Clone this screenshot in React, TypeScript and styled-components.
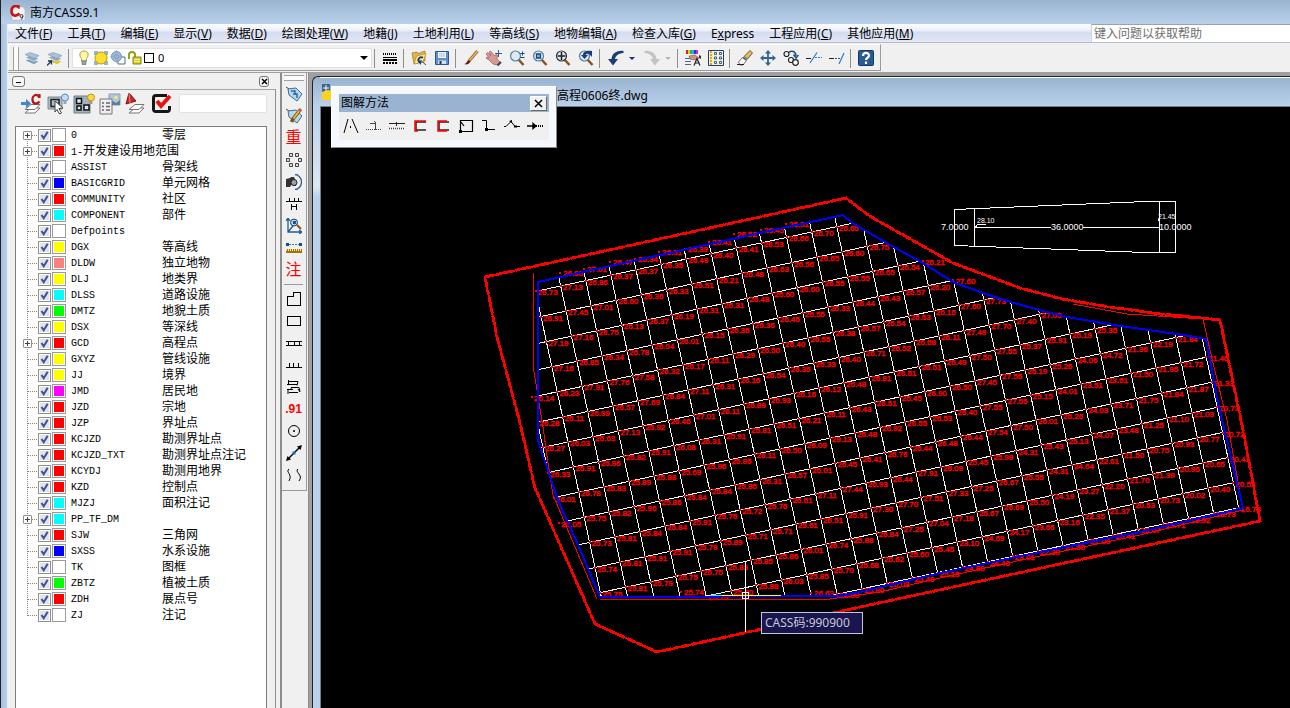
import React from "react";
import styled, { createGlobalStyle } from "styled-components";

const Global = createGlobalStyle`
  * { box-sizing: border-box; }
  html, body { margin: 0; height: 100%; }
  #root { height: 100%; }
  button { font: inherit; color: inherit; background: none; border: 0; padding: 0; cursor: default; }
`;

const UI = `"Noto Sans", "Noto Sans CJK SC", sans-serif`;

/* ---------- window frame ---------- */
const Window = styled.div`
  display: flex;
  flex-direction: column;
  min-height: 100vh;
  height: 100%;
  overflow: hidden;
  padding-left: 8px;
  font: 12px/16px ${UI};
  color: #000;
  background: linear-gradient(90deg, #1c2228 1px, #a9c2de 1px, #b9d1ea 7px, #e6eef8 7px);
`;
const TitleBar = styled.header`
  display: flex;
  align-items: center;
  gap: 4px;
  height: 24px;
  flex: none;
  margin-left: -7px;
  padding: 2px 0 0 9px;
  background: linear-gradient(#9ab3d0, #b9d1ea);
`;
const MenuBar = styled.nav`
  display: flex;
  align-items: stretch;
  height: 19px;
  flex: none;
  background: linear-gradient(#fcfdff 0, #e9eef8 7px, #d5dcee 8px, #e3e7f6 18px);
  border-bottom: 1px solid #b6bccc;
`;
const MenuItems = styled.div`
  display: flex;
  flex: 1;
  white-space: nowrap;
`;
const MenuItem = styled.button`
  padding: 0 8px 0 7px;
  line-height: 20px;
`;
const HelpBox = styled.input`
  width: 199px;
  padding: 0 2px;
  border: 0;
  border-top: 1px solid #a0a0a0;
  border-left: 1px solid #d0d4e0;
  font: 12px/16px ${UI};
  background: #fff;
  &::placeholder { color: #6d6d6d; opacity: 1; }
`;

/* ---------- toolbar ---------- */
const ToolStrip = styled.div`
  display: flex;
  height: 30px;
  flex: none;
  padding-top: 1px;
  background: #f0f0f0;
  border-bottom: 1px solid #a0a0a0;
`;
const ToolBar = styled.div`
  display: flex;
  align-items: center;
  height: 27px;
  padding: 1px 3px 0 4px;
  border: 1px solid #fff;
  border-right-color: #9a9a9a;
  border-bottom-color: #9a9a9a;
`;
const Grip = styled.span<{ $flat?: boolean }>`
  flex: none;
  width: ${(p) => (p.$flat ? "20px" : "6px")};
  height: ${(p) => (p.$flat ? "6px" : "23px")};
  margin: ${(p) => (p.$flat ? "0 0 2px" : "0 1px 0 0")};
  border: solid #a0a0a0;
  border-width: ${(p) => (p.$flat ? "1px 0" : "0 1px")};
  background: #fbfbfb;
`;
const ToolButton = styled.button<{ $caret?: boolean }>`
  display: flex;
  align-items: center;
  justify-content: center;
  gap: 5px;
  flex: none;
  width: ${(p) => (p.$caret ? "36px" : "23px")};
  height: 22px;
`;
const Sep = styled.span`
  flex: none;
  width: 1px;
  height: 19px;
  margin: 0 3px 0 2px;
  background: #8e8e8e;
`;
const LayerPicker = styled.label`
  display: flex;
  align-items: center;
  gap: 1px;
  width: 300px;
  height: 20px;
  padding-left: 3px;
  background: #fff;
  border: 1px solid #e2e2e2;
`;
const LayerColor = styled.span`
  width: 10px;
  height: 10px;
  border: 1px solid #000;
  background: #fff;
`;
const LayerSelect = styled.select`
  flex: 1;
  margin-left: 3px;
  height: 18px;
  border: 0;
  appearance: none;
  background: none;
  font: 11px/16px ${UI};
  color: #000;
`;
const Caret = styled.span<{ $color: string; $size: number }>`
  border: ${(p) => p.$size}px solid transparent;
  border-top-color: ${(p) => p.$color};
  border-bottom: 0;
  margin-right: ${(p) => (p.$size > 3 ? "3px" : "0")};
`;

/* ---------- body ---------- */
const Body = styled.div`
  display: flex;
  flex: 1;
  min-height: 0;
  background: #f0f0f0;
`;
const LayerPanel = styled.aside`
  display: flex;
  flex-direction: column;
  flex: none;
  width: 274px;
  border-right: 2px solid #8c8c8c;
`;
const PanelHead = styled.div`
  display: flex;
  justify-content: space-between;
  align-items: center;
  height: 16px;
  flex: none;
  padding: 1px 11px 0 4px;
`;
const PanelButton = styled.button<{ $w: number }>`
  display: flex;
  align-items: center;
  justify-content: center;
  width: ${(p) => p.$w}px;
  height: 11px;
  border: 1px solid #777;
  border-radius: 3px;
  background: #f6f6f6;
`;
const PanelFrame = styled.div`
  display: flex;
  flex-direction: column;
  flex: 1;
  min-height: 0;
  margin-right: 4px;
  padding: 0 8px 0 7px;
  border-top: 1px solid #a6a6a6;
  border-right: 1px solid #8c8c8c;
`;
const PanelTools = styled.div`
  display: flex;
  align-items: center;
  gap: 3px;
  height: 36px;
  flex: none;
  padding: 0 0 9px 6px;
`;
const PanelTool = styled.button`
  display: flex;
  flex: none;
  width: 23px;
  height: 22px;
`;
const Filter = styled.input`
  flex: 1;
  min-width: 0;
  height: 19px;
  margin-left: 2px;
  border: 1px solid #dde2ea;
  border-radius: 2px;
  background: #fff;
`;
const LayerList = styled.ul`
  flex: 1;
  min-height: 0;
  margin: 0;
  padding: 0;
  overflow: hidden;
  list-style: none;
  background: #fff;
  border: 1px solid #7c7c7c;
  border-bottom: 0;
`;
const LayerRow = styled.li`
  display: flex;
  align-items: center;
  height: 16px;
  padding-left: 7px;
`;
const Branch = styled.span<{ $first: boolean; $last: boolean }>`
  display: flex;
  align-items: center;
  flex: none;
  width: 15px;
  height: 16px;
  background:
    repeating-linear-gradient(90deg, #8a8a8a 0 1px, transparent 1px 2px) 5px 8px / 10px 1px no-repeat,
    repeating-linear-gradient(#8a8a8a 0 1px, transparent 1px 2px) 4px ${(p) => (p.$first ? 8 : 0)}px / 1px ${(p) => (p.$last ? 9 : 16)}px no-repeat;
`;
const Expander = styled.button`
  display: flex;
  align-items: center;
  justify-content: center;
  width: 9px;
  height: 9px;
  border: 1px solid #8f8f8f;
  border-radius: 1px;
  background: #fff;
`;
const LayerLabel = styled.label`
  display: flex;
  align-items: center;
  flex: 1;
  height: 16px;
  white-space: nowrap;
`;
const Check = styled.input`
  appearance: none;
  flex: none;
  width: 13px;
  height: 13px;
  margin: 0 1px 0 0;
  border: 1px solid #8e8f8f;
  outline: 1px solid #fff;
  outline-offset: -2px;
  background: #dfe4ea;
  &:checked {
    background: #dfe4ea url("data:image/svg+xml,%3Csvg xmlns='http://www.w3.org/2000/svg' viewBox='0 0 11 11'%3E%3Cpath d='M2.5 5l2.2 3.2L8.7 1.8' fill='none' stroke='%23354f9c' stroke-width='2'/%3E%3C/svg%3E") center / 11px no-repeat;
  }
`;
const Swatch = styled.span<{ $c: string }>`
  flex: none;
  width: 14px;
  height: 14px;
  margin-right: 5px;
  border: 1px solid #9b9b9b;
  background: ${(p) => p.$c};
  box-shadow: inset 0 0 0 1px #fff;
`;
const LayerCode = styled.span`
  width: 91px;
  padding-top: 1px;
  font: 10px/16px "Liberation Mono", "Noto Sans CJK SC", monospace;
  b { font: 12px/16px "Noto Sans CJK SC", sans-serif; }
`;
const SideBar = styled.div`
  flex: none;
  width: 27px;
  border-right: 1px solid #8c8c8c;
`;
const SideTools = styled.div`
  display: flex;
  flex-direction: column;
  align-items: center;
  width: 25px;
  padding: 2px 1px 4px 0;
  border: solid #9a9a9a;
  border-width: 0 1px 1px 0;
`;
const SideButton = styled.button<{ $tall?: boolean }>`
  display: flex;
  align-items: center;
  justify-content: center;
  width: 22px;
  height: 22px;
  color: #f00;
  font: ${(p) => (p.$tall ? "700 12px/22px" : "16px/22px")} "Liberation Sans", "Noto Sans CJK SC", sans-serif;
`;
const SideSep = styled.span`
  width: 19px;
  height: 1px;
  margin: 3px 0;
  background: #9a9a9a;
`;

/* ---------- drawing area ---------- */
const Workspace = styled.main`
  position: relative;
  flex: 1;
  min-width: 0;
  display: flex;
  padding: 3px 0 0 3px;
  background: #a0a0a0;
`;
const DocWindow = styled.section`
  display: flex;
  flex-direction: column;
  flex: 1;
  min-width: 0;
  padding-left: 7px;
  border: solid #222;
  border-width: 1px 0 0 1px;
  border-top-left-radius: 6px;
  background: linear-gradient(#9ab3d0 0, #b9d1ea 29px, #dbe7f4 110px, #b9d1ea 120px);
`;
const DocTitle = styled.div`
  display: flex;
  align-items: center;
  height: 29px;
  flex: none;
  border-top: 1px solid #fff;
  background: linear-gradient(#9ab3d0, #b9d1ea);
`;
const DocName = styled.span`
  margin-left: 221px;
  padding-top: 7px;
`;
const Canvas = styled.div`
  flex: 1;
  min-height: 0;
  overflow: hidden;
  background: #000;
  border: solid #7d7d7d;
  border-width: 1px 0 0 1px;
  svg { display: block; }
`;
const Palette = styled.div`
  position: absolute;
  left: 22px;
  top: 13px;
  width: 226px;
  padding: 7px;
  background: #f5f8fd;
  border: 1px solid #fff;
  border-right-color: #8a8a8a;
  border-bottom-color: #8a8a8a;
`;
const PaletteHead = styled.div`
  display: flex;
  align-items: center;
  justify-content: space-between;
  height: 18px;
  padding: 0 2px;
  background: #9ab3d0;
`;
const PaletteClose = styled.button`
  display: flex;
  align-items: center;
  justify-content: center;
  width: 17px;
  height: 15px;
  background: #f0f0f0;
  border: 1px solid #fff;
  border-right-color: #696969;
  border-bottom-color: #696969;
`;
const PaletteTools = styled.div`
  display: flex;
  height: 28px;
  align-items: center;
  background: #f0f0f0;
`;

/* ---------- icons ---------- */
type IconProps = { s?: number; children: React.ReactNode };
const Icon = ({ s = 16, children }: IconProps) => (
  <svg width={s} height={s} viewBox={`0 0 ${s} ${s}`} fill="none" aria-hidden="true">
    {children}
  </svg>
);
const Sheets = ({ top = "#a9c3dc", low = "#7e9db9" }) => (
  <>
    <path d="M1 10.500l5-2 9 3-5 3z" fill={low} stroke="#fff" strokeWidth=".5" />
    <path d="M1 7.500l5-2 9 3-5 3z" fill="#8fabc5" stroke="#fff" strokeWidth=".5" />
    <path d="M1 4.500l5-2 9 3-5 3z" fill={top} stroke="#6d89a4" strokeWidth=".5" />
  </>
);
const AppLogo = () => (
  <Icon s={16}>
    <path d="M2 2h11l2 3v10H2z" fill="#f3f3f3" stroke="#bbb" strokeWidth=".6" />
    <path d="M9 2.500C6-.5 1.500 1 1.500 6S6 12 9.500 8.500" stroke="#c11" strokeWidth="2.600" />
    <path d="M9 0v4" stroke="#911" />
    <circle cx="11.500" cy="11" r="1.500" stroke="#333" />
    <path d="M13 11.500l-1.500 3" stroke="#333" />
  </Icon>
);
const LayersIcon = () => <Icon><Sheets /></Icon>;
const LayerPrevIcon = () => (
  <Icon>
    <Sheets low="#e0c020" />
    <path d="M0 15.500l4-4M1 11h3.500v3.500" stroke="#123a66" strokeWidth="1.300" />
  </Icon>
);
const BulbIcon = () => (
  <Icon>
    <path d="M8 1c-5 0-5 5-2.500 7.500V11h5V8.500C13 6 13 1 8 1z" fill="#fff6a8" stroke="#b29a3a" />
    <path d="M6 11h4v3.500H6z" fill="#9aa5ae" stroke="#59646c" strokeWidth=".6" />
  </Icon>
);
const SunIcon = () => (
  <Icon>
    <path d="M1 1h4v4H1zM11 1h4v4h-4zM1 11h4v4H1zM11 11h4v4h-4z" fill="#8fb8c8" />
    <circle cx="8" cy="8" r="6" fill="#ffdf2e" stroke="#b8971a" />
  </Icon>
);
const FreezeIcon = () => (
  <Icon>
    <path d="M8 7h7v7H8z" fill="#fff" stroke="#4d6f8c" />
    <circle cx="6.500" cy="6.500" r="5" fill="#a3bdd6" stroke="#7494b2" />
    <circle cx="6.500" cy="6.500" r="2" fill="#c9daea" stroke="#6d8fb0" />
    <path d="M6.500 0v13M0 6.500h13" stroke="#8ba8c3" strokeWidth=".7" />
  </Icon>
);
const LockIcon = () => (
  <Icon>
    <path d="M2 9V4.500C2 1 8 1 8 4.500V8" stroke="#98a018" strokeWidth="2" />
    <path d="M6 7h8v7H6z" fill="#d6d02c" stroke="#7f8414" />
    <path d="M7 9.500h6M7 11.500h6" stroke="#fff9a0" strokeWidth=".8" />
  </Icon>
);
const LineTypeIcon = () => (
  <Icon>
    <g shapeRendering="crispEdges" stroke="#000">
      <path d="M1 4h14" strokeWidth="2" strokeDasharray="1 1" />
      <path d="M1 7.500h14" />
      <path d="M1 10h14" strokeWidth="2" />
      <path d="M1 13h14" strokeWidth="2" strokeDasharray="2 1" />
    </g>
  </Icon>
);
const OpenIcon = () => (
  <Icon>
    <path d="M1 3l5-1 1 1.500L14 1v10L3 14z" fill="#e0b54a" stroke="#9b7420" strokeWidth=".7" />
    <path d="M3 14L5.500 6 15 3.500 12 12z" fill="#ffe08a" stroke="#b08a30" strokeWidth=".7" />
    <path d="M12 7.500c-4-1-6 2-3.500 4.500" stroke="#183f78" strokeWidth="1.800" />
    <path d="M6.500 10.500l4.500 0-1.500 4.500z" fill="#183f78" />
    <path d="M11 11.500l4 3.500" stroke="#345" strokeWidth="1" />
  </Icon>
);
const SaveIcon = () => (
  <Icon>
    <path d="M1.500 1.500h13v13h-13z" fill="#5f8fcf" stroke="#2b5592" />
    <path d="M4 2h8v6H4z" fill="#eef3f9" />
    <path d="M5 4h6M5 6h6" stroke="#9ab" strokeWidth=".7" />
    <path d="M4 10.500h8V14H4z" fill="#d7dee8" />
    <path d="M5.500 11h2v3h-2z" fill="#234" />
  </Icon>
);
const BrushIcon = () => (
  <Icon>
    <path d="M14.500 1L6 11" stroke="#8a5a22" strokeWidth="3" />
    <path d="M14.500 1L6 11" stroke="#edb765" strokeWidth="1.500" />
    <path d="M1 14c3 0 2-3 5-4l1.500 1.500C6 14 4 15 1 14z" fill="#641c14" />
  </Icon>
);
const PanIcon = () => (
  <Icon>
    <path d="M0 4l1.500-1.500L5 6 3 2l1.500-1L8 5l1 1 1-1.500 1.500.5L11 9l3 3-3 3-4-1-4-4-3-2 1-1 2 .5z" fill="#d59a96" stroke="#99585a" strokeWidth=".7" />
    <path d="M12.500 0v7M9 3.500h7" stroke="#2b5c94" />
    <path d="M11.500 15.500l3.500-3.500" stroke="#345" strokeWidth="2" />
  </Icon>
);
const Lens = ({ children, s = "#5a7c9a" }: { children?: React.ReactNode; s?: string }) => (
  <Icon>
    <path d="M9.500 9.500L14.500 15" stroke="#8d5120" strokeWidth="2.500" />
    <circle cx="6.500" cy="6" r="5" fill="#dbe9f3" stroke={s} strokeWidth="1.200" />
    {children}
  </Icon>
);
const UndoArrow = ({ c }: { c: string }) => (
  <path d="M15.500 1C8 0 4 4 3.500 9H0l5 6.500L10 9H7c.5-3 3-5.500 8.500-6z" fill={c} />
);
const PropsIcon = () => (
  <Icon>
    {["#e02020", "#e0d020", "#20c040", "#20b0e0", "#3030e0", "#e020d0"].map((c, i) => (
      <rect key={c} x={1 + i * 2} y="0" width="2" height="4" fill={c} />
    ))}
    <path d="M4 6l6-1 4 3-4 2-5-1z" fill="#cf9288" stroke="#874a46" strokeWidth=".6" />
    <path d="M0 8.500h5M0 11.500h6M0 14.500h6" stroke="#446a98" />
    <path d="M9 15.500l3-7 3 7M10 13h4" stroke="#222" strokeWidth="1.200" />
    <path d="M14 5l2 1v3l-2-1z" fill="#333" />
  </Icon>
);
const DesignCenterIcon = () => (
  <Icon>
    <path d="M.5.5h15v15H.5z" fill="#f6efc8" stroke="#1f3e73" />
    <path d="M3 1v14" stroke="#dba820" strokeWidth="2" strokeDasharray="2 1" />
    <path d="M6.500 2.500h2v2h-2zM11.500 2.500h2v2h-2zM6.500 7h2v2h-2zM11.500 7h2v2h-2zM6.500 11.500h2v2h-2zM11.500 11.500h2v2h-2z" fill="#fff" stroke="#345a90" />
  </Icon>
);
const EraserIcon = () => (
  <Icon>
    <path d="M1.500 12l4-4.500 4 3-3.500 4.500H3z" fill="#f4f4f4" stroke="#555" strokeWidth=".8" />
    <path d="M7 6.500l6-6 2.500 2.500L10.500 9z" fill="#e7b75c" stroke="#4a3b20" strokeWidth=".8" />
    <path d="M6 7.500l3.500 2.500" stroke="#345a80" strokeWidth="1.500" />
    <path d="M0 14.500h7" stroke="#222" />
  </Icon>
);
const MoveIcon = () => (
  <Icon>
    <path d="M8 2v12M2 8h12" stroke="#2f6298" strokeWidth="1.800" />
    <path d="M8 0L5 3.500h6zM8 16l-3-3.500h6zM0 8l3.500-3v6zM16 8l-3.500-3v6z" fill="#2f6298" />
  </Icon>
);
const CopyIcon = () => (
  <Icon>
    <circle cx="3.500" cy="4" r="2.500" stroke="#222" strokeWidth="1.200" />
    <circle cx="8" cy="10" r="2.500" fill="#fff" stroke="#222" strokeWidth="1.200" />
    <circle cx="12.500" cy="12.500" r="2.800" fill="#fff" stroke="#222" strokeWidth="1.200" />
    <path d="M6 2c4-2 7 0 7 4M10.500 4.500L13 8l2.500-3" stroke="#1d4f8a" strokeWidth="1.500" />
  </Icon>
);
const TrimIcon = () => (
  <Icon>
    <path d="M0 8.500h5" stroke="#222" />
    <path d="M9 7.500h7" stroke="#2a7ad0" strokeWidth="1.200" strokeDasharray="2 1" />
    <path d="M4 13L11 2.500" stroke="#2a7ad0" strokeWidth="1.200" />
  </Icon>
);
const ExtendIcon = () => (
  <Icon>
    <path d="M0 8.500h5" stroke="#222" />
    <path d="M6 8.500h5" stroke="#555" strokeDasharray="2 1" />
    <path d="M10 14l5-11" stroke="#2a7ad0" strokeWidth="1.200" />
  </Icon>
);
const HelpIcon = () => (
  <Icon>
    <rect x=".5" y=".5" width="15" height="15" rx="1" fill="#2a5b93" stroke="#123a66" />
    <path d="M5 6c0-4 6-4 6-.5C11 8 8 7.500 8 10M8 11.500V14" stroke="#fff" strokeWidth="2.200" />
  </Icon>
);

const Stack = ({ y = 8 }) => (
  <g stroke="#777" fill="#fff">
    <path d={`M4 ${y + 9}l6-5h9l-5 5z`} />
    <path d={`M4 ${y + 5.5}l6-5h9l-5 5z`} />
  </g>
);
const panelTools: [string, React.ReactNode][] = [
  ["设置图层", <Icon s={22} key="a"><Stack y={11} /><path d="M0 9h5V6l5 4.500L5 15v-3H0z" fill="#3d87d6" /><path d="M18.500 4.500C15-.5 11 3 11.500 7s4 5 7 1.500M18.500 1v4" stroke="#b81414" strokeWidth="2.200" /></Icon>],
  ["选择对象", <Icon s={22} key="b"><path d="M1 4h14v12H1z" fill="#aebdc4" stroke="#7b8a92" /><path d="M4 6.500h8v7H4z" stroke="#222" strokeWidth="1.500" /><path d="M8 8l8 7-4 .5 2.500 4.500-2 1-2.500-4.500L8 19z" fill="#fff" stroke="#444" /><circle cx="18" cy="4.500" r="3.500" fill="#c3dcf6" stroke="#5c89bd" /><path d="M16.500 8h3v3h-3z" fill="#8ea9c4" /></Icon>],
  ["打开图层", <Icon s={22} key="c"><path d="M1 3h16v17H1z" fill="#9fb4bd" stroke="#6d7f89" /><path d="M3.500 5.500h5v5h-5zM4 13h4v4H4zM11 12h5v5h-5z" fill="#dfe6e9" stroke="#111" strokeWidth="1.500" /><circle cx="18" cy="4.500" r="3.500" fill="#ffd83a" stroke="#bf9413" /><path d="M16.500 8h3v3h-3z" fill="#a99" /></Icon>],
  ["图层属性", <Icon s={22} key="d"><path d="M10 1h11v11H10z" fill="#a7c9e6" stroke="#99a" /><path d="M10 12l4-4 3 2 4-3v5z" fill="#5d7f97" /><circle cx="17" cy="4.500" r="1.800" fill="#ffe36b" /><path d="M1 6h12v15H1z" fill="#eee" stroke="#777" /><path d="M3 10h2M3 13.500h2M3 17h2M7 10h4M7 13.500h4M7 17h4" stroke="#666" strokeWidth="1.500" /></Icon>],
  ["图层排序", <Icon s={22} key="e"><Stack y={11} /><path d="M4 0l7 8-10 3z" fill="#c32a2a" stroke="#7d1414" /><path d="M4 0l1 10" stroke="#e88" /></Icon>],
  ["确认", <Icon s={22} key="f"><path d="M16 2.500H5c-2 0-2.500 1-2.500 2.500v11c0 2 .5 2.500 2.500 2.500h11c2 0 2.500-.5 2.500-2.500v-3" stroke="#151515" strokeWidth="3" /><path d="M6 8l4 5L19 3" stroke="#e81010" strokeWidth="4" /></Icon>],
];

const layers: [string, string, string, boolean?][] = [
  ["0", "零层", "#fff", true],
  ["1-开发建设用地范围", "", "#f00", true],
  ["ASSIST", "骨架线", "#fff"],
  ["BASICGRID", "单元网格", "#00f"],
  ["COMMUNITY", "社区", "#f00"],
  ["COMPONENT", "部件", "#0ff"],
  ["Defpoints", "", "#fff"],
  ["DGX", "等高线", "#ff0"],
  ["DLDW", "独立地物", "#ff7f7f"],
  ["DLJ", "地类界", "#ff0"],
  ["DLSS", "道路设施", "#0ff"],
  ["DMTZ", "地貌土质", "#0f0"],
  ["DSX", "等深线", "#ff0"],
  ["GCD", "高程点", "#f00", true],
  ["GXYZ", "管线设施", "#ff0"],
  ["JJ", "境界", "#ff0"],
  ["JMD", "居民地", "#f0f"],
  ["JZD", "宗地", "#f00"],
  ["JZP", "界址点", "#f00"],
  ["KCJZD", "勘测界址点", "#f00"],
  ["KCJZD_TXT", "勘测界址点注记", "#f00"],
  ["KCYDJ", "勘测用地界", "#f00"],
  ["KZD", "控制点", "#f00"],
  ["MJZJ", "面积注记", "#0ff"],
  ["PP_TF_DM", "", "#0ff", true],
  ["SJW", "三角网", "#f00"],
  ["SXSS", "水系设施", "#00f"],
  ["TK", "图框", "#fff"],
  ["ZBTZ", "植被土质", "#0f0"],
  ["ZDH", "展点号", "#f00"],
  ["ZJ", "注记", "#fff"],
];

const menus: [string, string][] = [
  ["文件", "F"], ["工具", "T"], ["编辑", "E"], ["显示", "V"], ["数据", "D"], ["绘图处理", "W"], ["地籍", "J"],
  ["土地利用", "L"], ["等高线", "S"], ["地物编辑", "A"], ["检查入库", "G"], ["Express", ""], ["工程应用", "C"], ["其他应用", "M"],
];

const Tag = () => (
  <>
    <path d="M0 1l3 2" stroke="#345" />
    <path d="M2 3l8-1 6 6-5 7-8-6z" fill="#b9d7ec" stroke="#3c6d94" />
  </>
);
type Side = { name: string; icon?: React.ReactNode; text?: string; bold?: boolean };
const sideTop: Side[] = [
  { name: "查看编码", icon: <Icon><Tag /><path d="M5 5h4v4M11 12V8H7" stroke="#2c6aa8" strokeWidth="1.500" /></Icon> },
  { name: "修改编码", icon: <Icon><Tag /><path d="M14.500 1.500L7 11l-1.500 3" stroke="#7a5512" strokeWidth="3.500" /><path d="M14 2L7.500 10.500" stroke="#f1b52d" strokeWidth="2" /><path d="M13 3l2-2" stroke="#d05a5a" strokeWidth="3" /></Icon> },
  { name: "重新生成", text: "重" },
  { name: "批量选取", icon: <Icon><path d="M3.500 1.500h3v3h-3zM9.500 1.500h3v3h-3zM.5 6.500h3v3h-3zM12.500 6.500h3v3h-3zM3.500 11.500h3v3h-3zM9.500 11.500h3v3h-3z" fill="#ddd" stroke="#444" /></Icon> },
  { name: "重复目标", icon: <Icon><path d="M0 5l4-1 1-1h3l1 2 1 7H7l-1-2-2 3H0z" fill="#333" /><circle cx="8" cy="8.500" r="3" fill="#98a4ad" stroke="#222" /><path d="M11 1c6 3 6 11 0 14M9 .5l3 .5M9 15.500l3-.5" stroke="#355c88" strokeWidth="1.300" /></Icon> },
  { name: "陡坎", icon: <Icon><path d="M0 5.500h16M3.500 5V2M8.500 5V2M12.500 5V2M5.500 8v6M10.500 8v6M5 10.500h6" stroke="#000" shapeRendering="crispEdges" /></Icon> },
  { name: "坐标查询", icon: <Icon><path d="M2 1v13h13M0 3l2-3 2 3M13 12l3 2-3 2M2 14l5-6" stroke="#1f5c96" strokeWidth="1.300" /><circle cx="8" cy="4.500" r="3.500" fill="#a6d2f0" stroke="#345" /><path d="M7 3h3v3H7z" fill="#13549c" /><path d="M11 7l4 4" stroke="#8d5120" strokeWidth="2" /></Icon> },
  { name: "距离", icon: <Icon><path d="M0 3h3v3H0zM13 3h3v3h-3z" fill="#12508f" /><path d="M3 4.500h10" stroke="#2a7ac0" strokeDasharray="2 1" /><path d="M0 9h16v4H0z" fill="#9c7410" /><path d="M0 10h16" stroke="#ffe880" strokeWidth="2" strokeDasharray="1 1" /></Icon> },
  { name: "文字注记", text: "注" },
];
const sideBottom: Side[] = [
  { name: "多点房屋", icon: <Icon><path d="M1.500 14.500v-9h6v-4h7v13z" stroke="#000" shapeRendering="crispEdges" /></Icon> },
  { name: "四点房屋", icon: <Icon><path d="M1.500 3.500h13v9h-13z" stroke="#000" shapeRendering="crispEdges" /></Icon> },
  { name: "依比例围墙", icon: <Icon><path d="M0 6.500h16M0 10.500h16M2.500 6v5M8.500 6v5M13.500 6v5" stroke="#000" shapeRendering="crispEdges" /></Icon> },
  { name: "坎线", icon: <Icon><path d="M0 10.500h16M3.500 10V6M7.500 10V6M12.500 10V6" stroke="#000" shapeRendering="crispEdges" /></Icon> },
  { name: "自然斜坡", icon: <Icon><path d="M2.500 1v5M2 2.500h10l-1 4M1 5.500h10M5 8.500h8l1 4M1 10.500h6M3 13.500h9M2 11v4M6 8.500l-2 2M12 10l2 3" stroke="#000" /></Icon> },
  { name: "高程点", text: ".91", bold: true },
  { name: "圆", icon: <Icon><circle cx="8" cy="8" r="5.500" stroke="#000" /><path d="M7.500 7.500h1v1h-1z" stroke="#000" /></Icon> },
  { name: "直线", icon: <Icon><path d="M2 14L14 2" stroke="#000" strokeWidth="1.500" /><path d="M0 16l1.500-5L5 14.500zM16 0l-5 1.500L14.500 5z" fill="#000" /><path d="M6.500 6.500h3v3h-3z" fill="#1670c8" /></Icon> },
  { name: "曲线", icon: <Icon><path d="M3 2c-4 3 4 5 0 12M12 2c-4 3 6 6 1 12" stroke="#000" /></Icon> },
];

const paletteTools: [string, React.ReactNode][] = [
  ["交会", <path key="p" d="M1 15L5 1M15 15L9 1M7.500 8v2" stroke="#000" />],
  ["垂距", <><path key="p" d="M9.500 12V5M4 5.500h6M8 3l2 2" stroke="#444" /><path d="M0 11.500h16" stroke="#444" strokeDasharray="1 1" /></>],
  ["平行", <><path key="p" d="M0 5.500h16M7.500 4v4" stroke="#222" /><path d="M0 10.500h16" stroke="#444" strokeWidth="1.500" strokeDasharray="1 1" /></>],
  ["直角甲", <><path key="p" d="M14 4H4v8h10" stroke="#222" strokeWidth="1.500" /><path d="M14 3H3v10h3" stroke="#f00" strokeWidth="1.500" /></>],
  ["直角乙", <><path key="p" d="M14 4H4v8h10" stroke="#222" strokeWidth="1.500" /><path d="M12 3H3v10h9" stroke="#f00" strokeWidth="1.500" /></>],
  ["矩形", <><path key="p" d="M2.500 14V2.500h12v11H3M3 4l3 4" stroke="#000" strokeWidth="1.200" /><path d="M1 12h3v3H1z" fill="#000" /></>],
  ["折线", <><path key="p" d="M1 2.500h4.500v9H14" stroke="#000" /><path d="M4 10h3v3H4z" fill="#000" /></>],
  ["偏移", <><path key="p" d="M0 8.500h2l5-5 4 5h5" stroke="#000" /><path d="M5 3l3-1v3zM10 7.500h3v2h-3z" fill="#000" /></>],
  ["延长", <><path key="p" d="M0 8h9M6 5.500l3 2.500-3 2.500z" stroke="#000" strokeWidth="1.300" fill="#000" /><path d="M9 8h7" stroke="#000" strokeWidth="2" strokeDasharray="1 1" /></>],
];

/* ---------- elevation grid ---------- */
const nodeX = (i: number, j: number) => 560.7 + 25.1 * i + 5.4 * j;
const nodeY = (i: number, j: number) => 286 - 5.4 * i + 25.1 * j;

/* For each grid row: index of the first node, then heights from west to east. */
const heights: [number, string][] = [
  [-1, "26.73 27.13 26.86 26.37 26.37 26.35 26.49 26.40 26.41 26.53 26.66 26.70 26.65"],
  [-1, "26.91 27.45 27.01 26.60 26.36 26.33 26.51 26.21 26.48 26.63 26.56 26.65 26.60 26.75"],
  [-1, "27.19 27.16 26.75 26.13 26.37 26.19 26.31 26.31 26.48 26.60 26.60 26.55 26.55 26.65 26.54 26.21"],
  [-1, "27.16 26.85 26.34 26.78 26.04 26.01 26.15 26.36 26.36 26.45 26.55 26.33 26.44 26.43 26.57 26.20 27.60"],
  [-2, "26.14 26.23 27.91 27.76 27.58 26.32 26.17 26.11 26.29 26.50 26.40 26.55 26.38 26.57 26.54 26.53 26.16 27.60 27.73"],
  [-2, "26.28 26.11 26.99 26.57 27.69 26.84 27.11 26.31 26.16 26.54 26.35 26.33 26.40 26.71 26.52 26.68 26.11 27.49 27.70 27.40 27.03"],
  [-2, "26.27 26.03 26.63 27.13 25.92 26.46 27.01 26.11 26.89 26.93 26.16 26.12 26.48 26.81 26.51 26.51 26.49 27.50 27.55 25.37 25.91 25.19 25.35"],
  [-2, "26.33 25.91 25.96 25.82 25.91 26.08 26.31 25.91 25.81 26.51 26.21 26.11 26.43 26.51 26.45 26.90 26.50 27.45 27.55 25.19 25.26 24.06 24.72 21.36 22.19 21.84"],
  [-2, "26.01 25.78 25.83 25.89 25.88 25.69 25.96 25.95 26.11 26.50 26.09 29.13 26.48 26.92 26.55 26.53 26.40 27.55 27.55 25.15 24.01 23.51 23.61 21.50 21.95 21.72 21.46"],
  [-2, "26.05 25.75 25.82 25.96 25.86 25.84 25.84 25.86 26.31 26.57 26.01 26.45 26.41 26.76 26.44 26.48 26.44 27.54 27.50 26.01 26.26 24.03 23.71 21.75 21.84 21.87 21.33"],
  [-1, "25.73 25.81 25.84 25.84 25.91 25.76 25.72 25.76 26.61 27.11 27.44 26.93 26.44 27.91 26.09 25.45 25.99 24.31 25.43 25.13 24.07 23.48 21.25 21.10 21.03 20.73"],
  [-1, "25.74 25.81 25.91 25.91 25.79 25.89 25.71 25.71 25.61 26.51 25.91 27.30 27.70 27.51 27.33 27.25 26.67 25.55 24.31 24.64 22.61 21.50 20.75 20.93 20.77 20.72"],
  [-1, "25.75 25.81 25.79 25.75 25.75 25.83 25.85 25.86 26.01 26.74 25.88 26.84 27.25 27.04 27.18 25.67 26.69 25.50 24.19 23.27 22.20 21.70 21.39 20.95 20.65 20.41"],
  [3, "25.75 25.80 25.88 26.03 25.85 25.70 25.68 25.62 25.60 25.45 23.10 24.69 24.17 23.66 23.16 22.35 21.37 20.53 20.73 20.02 20.40 20.53"],
  [8, "26.00 25.80 26.03 25.40 25.15 24.80 24.40 23.01 22.30 21.50 21.00 20.41 20.07 19.71 18.92 18.73 16.78"],
];
const borderHeights: [number, number, string][] = [
  [560, 273, "26.86"], [584, 269, "27.01"], [610, 262, "26.47"], [635, 259, "26.34"], [659, 252, "26.31"],
  [685, 249, "26.39"], [709, 242, "26.41"], [734, 234, "26.52"], [761, 230, "26.45"], [786, 224, "26.31"],
  [681, 592, "25.74"], [811, 593, "26.63"],
];
const boundary =
  "538,282 760,233 843,215 852,223 890,245 923,263 953,282 983,293 1007,301 1039,310 1067,317 1120,326 1177,334 1206,339 1218,403 1222,420 1243,508 1140,532 1040,552 940,573 860,592 840,596 600,597 578,545 557,498 538,440";
const outer =
  "485,277 760,217 846,198 868,215 880,222 953,263 1020,288 1062,299 1110,307 1160,314 1203,318 1220,320 1243,430 1260,521 860,607 762,629 657,652 595,624 535,488 520,423 497,337";
const inner =
  "533,273 534,372 543,427 548,463 553,495 597,599 823,600 880,592 940,578 1040,556 1140,535 1243,510 1227,420 1213,363 1203,319 1127,314 1073,304";

const range = (a: number, b: number) => Array.from({ length: b - a + 1 }, (_, k) => a + k);

const Drawing = () => (
  <svg width="969" height="601" viewBox="321 107 969 601" fill="none" shapeRendering="crispEdges" role="img" aria-label="高程方格网">
    <clipPath id="site"><polygon points={boundary} /></clipPath>
    <g clipPath="url(#site)" stroke="#fff">
      {range(-1, 14).map((j) => (
        <line key={`r${j}`} x1={nodeX(-3, j)} y1={nodeY(-3, j)} x2={nodeX(24, j)} y2={nodeY(24, j)} />
      ))}
      {range(-2, 24).map((i) => (
        <line key={`c${i}`} x1={nodeX(i, -2)} y1={nodeY(i, -2)} x2={nodeX(i, 15)} y2={nodeY(i, 15)} />
      ))}
    </g>
    <polyline points={inner} stroke="#f00" />
    <g fill="#f00" fontFamily='"Liberation Sans", sans-serif' fontSize="8">
      {heights.map(([start, row], j) =>
        row.split(" ").map((h, k) => {
          const x = nodeX(start + k, j);
          const y = nodeY(start + k, j);
          return (
            <g key={`${j}-${k}`}>
              <rect x={x - 1} y={y - 1} width="2" height="2" />
              <text x={x + 2} y={y + 4} stroke="#f00" strokeWidth=".4">{h}</text>
            </g>
          );
        })
      )}
      {borderHeights.map(([x, y, h]) => (
        <g key={`${x}`}>
          <rect x={x - 1} y={y - 1} width="2" height="2" />
          <text x={x + 3} y={y + 3} stroke="#f00" strokeWidth=".4">{h}</text>
        </g>
      ))}
    </g>
    <polygon points={boundary} stroke="#00f" strokeWidth="2" />
    <polygon points={outer} stroke="#f00" strokeWidth="2" />
    <polygon points={outer} stroke="#f00" strokeWidth="3" strokeDasharray="9 3 5 2" />

    <g stroke="#fff">
      <path d="M954.500 209.500L1146 201.500H1176M954.500 245.500L1146 252.500H1176M954.500 209v37M974.500 209v37M1159.500 202v50M1175.500 202v50M975 227.500h76M1083 227.500h76" />
      <path d="M975 228l3-4h8M1158 219l2 3" />
    </g>
    <g fill="#fff" fontFamily='"Liberation Sans", sans-serif' fontSize="9">
      <text x="941" y="230">7.0000</text>
      <text x="1051" y="230">36.0000</text>
      <text x="1159" y="230">10.0000</text>
      <g fontSize="7">
        <text x="977" y="223">28.10</text>
        <text x="1158" y="219">21.45</text>
      </g>
    </g>

    <path d="M705 595.500h40" stroke="#fff" />
    <path d="M710 595.500h12" stroke="#0ff" />
    <path d="M722 595.500h59" stroke="#ff0" />
    <path d="M745.500 562v70M742.500 592.500h6v6h-6z" stroke="#fff" />

    <rect x="761.5" y="612.5" width="101" height="21" fill="#19154f" stroke="#c4c4dc" />
    <text x="765" y="627" fill="#c8c8d4" fontFamily='"Noto Sans", "Noto Sans CJK SC", sans-serif' fontSize="12">CASS码:990900</text>
  </svg>
);

const Btn = ({ name, children }: { name: string; children: React.ReactNode }) => (
  <ToolButton type="button" aria-label={name}>{children}</ToolButton>
);
const SideItem = ({ t }: { t: Side }) => (
  <SideButton type="button" aria-label={t.name} $tall={t.bold}>{t.icon ?? t.text}</SideButton>
);

export default function App() {
  return (
    <Window>
      <Global />
      <TitleBar>
        <AppLogo />
        <span>南方CASS9.1</span>
      </TitleBar>
      <MenuBar>
        <MenuItems>
          {menus.map(([label, key]) => (
            <MenuItem type="button" key={label}>
              {key ? <>{label}(<u>{key}</u>)</> : <>E<u>x</u>press</>}
            </MenuItem>
          ))}
        </MenuItems>
        <HelpBox aria-label="帮助" placeholder="键入问题以获取帮助" />
      </MenuBar>
      <ToolStrip>
        <ToolBar>
          <Grip />
          <Btn name="图层特性"><LayersIcon /></Btn>
          <Btn name="上一个图层"><LayerPrevIcon /></Btn>
          <Sep />
          <LayerPicker>
            <BulbIcon /><SunIcon /><FreezeIcon /><LockIcon /><LayerColor />
            <LayerSelect aria-label="当前图层"><option>0</option></LayerSelect>
            <Caret $color="#000" $size={4} />
          </LayerPicker>
          <Sep />
          <Btn name="线型"><LineTypeIcon /></Btn>
          <Sep />
          <Btn name="打开"><OpenIcon /></Btn>
          <Btn name="保存"><SaveIcon /></Btn>
          <Sep />
          <Btn name="特性匹配"><BrushIcon /></Btn>
          <Btn name="平移"><PanIcon /></Btn>
          <Btn name="实时缩放"><Lens><path d="M11.500 3.500h4M13.500 1.500v4M11.500 7.500h4" stroke="#134a80" /></Lens></Btn>
          <Btn name="窗口缩放"><Lens><path d="M4.500 4h4v4h-4z" fill="#86abd0" stroke="#134a80" strokeWidth="1.300" /></Lens></Btn>
          <Btn name="范围缩放"><Lens s="#333"><path d="M6.500 2v8M2.500 6h8" stroke="#222" strokeWidth="1.500" /></Lens></Btn>
          <Btn name="上一个视图"><Lens><path d="M14 1C8 0 5 2 5 5H3l3.500 4L10 5H8c0-2 3-2 6 2z" fill="#183f78" /></Lens></Btn>
          <Sep />
          <ToolButton type="button" aria-label="放弃" $caret><Icon><UndoArrow c="#1c3f73" /></Icon><Caret $color="#1c2f73" $size={3} /></ToolButton>
          <ToolButton type="button" aria-label="重做" $caret><Icon><g transform="matrix(-1 0 0 1 16 0)"><UndoArrow c="#c3c3c3" /></g></Icon><Caret $color="#b5b5b5" $size={3} /></ToolButton>
          <Sep />
          <Btn name="特性"><PropsIcon /></Btn>
          <Btn name="设计中心"><DesignCenterIcon /></Btn>
          <Sep />
          <Btn name="删除"><EraserIcon /></Btn>
          <Btn name="移动"><MoveIcon /></Btn>
          <Btn name="复制"><CopyIcon /></Btn>
          <Btn name="修剪"><TrimIcon /></Btn>
          <Btn name="延伸"><ExtendIcon /></Btn>
          <Sep />
          <Btn name="帮助"><HelpIcon /></Btn>
        </ToolBar>
      </ToolStrip>

      <Body>
        <LayerPanel>
          <PanelHead>
            <PanelButton type="button" aria-label="折叠" $w={13}>
              <Icon s={7}><path d="M1 4.500h5" stroke="#000" /></Icon>
            </PanelButton>
            <PanelButton type="button" aria-label="关闭" $w={10}>
              <Icon s={7}><path d="M1 1l5 5M6 1L1 6" stroke="#000" strokeWidth="1.500" /></Icon>
            </PanelButton>
          </PanelHead>
          <PanelFrame>
            <PanelTools>
              {panelTools.map(([name, icon]) => (
                <PanelTool type="button" key={name} aria-label={name}>{icon}</PanelTool>
              ))}
              <Filter aria-label="筛选图层" />
            </PanelTools>
            <LayerList>
              {layers.map(([code, title, color, parent], n) => {
                const cjk = /^(.*?)([\u4e00-\u9fff]+)$/.exec(code);
                return (
                  <LayerRow key={code}>
                    <Branch $first={n === 0} $last={n === layers.length - 1}>
                      {parent && (
                        <Expander type="button" aria-label={`展开 ${code}`}>
                          <Icon s={7}><path d="M1 3.500h5M3.500 1v5" stroke="#345" /></Icon>
                        </Expander>
                      )}
                    </Branch>
                    <LayerLabel>
                      <Check type="checkbox" defaultChecked />
                      <Swatch $c={color} />
                      <LayerCode>{cjk ? <>{cjk[1]}<b>{cjk[2]}</b></> : code}</LayerCode>
                      <span>{title}</span>
                    </LayerLabel>
                  </LayerRow>
                );
              })}
            </LayerList>
          </PanelFrame>
        </LayerPanel>

        <SideBar>
          <SideTools>
            <Grip $flat />
            {sideTop.map((t) => <SideItem key={t.name} t={t} />)}
            <SideSep />
            {sideBottom.map((t) => <SideItem key={t.name} t={t} />)}
          </SideTools>
        </SideBar>

        <Workspace>
          <DocWindow>
            <DocTitle>
              <Icon><path d="M2 0h8v8H2z" fill="#3a6590" /><path d="M6 1v6M3 4h6" stroke="#fff" /><path d="M2 8l6-2 7 2v8H2z" fill="#ffd21c" /></Icon>
              <DocName>高程0606终.dwg</DocName>
            </DocTitle>
            <Canvas><Drawing /></Canvas>
          </DocWindow>
          <Palette>
            <PaletteHead>
              <span>图解方法</span>
              <PaletteClose type="button" aria-label="关闭">
                <Icon s={9}><path d="M1 1l7 7M8 1L1 8" stroke="#000" strokeWidth="1.500" /></Icon>
              </PaletteClose>
            </PaletteHead>
            <PaletteTools>
              {paletteTools.map(([name, icon]) => (
                <Btn key={name} name={name}><Icon>{icon}</Icon></Btn>
              ))}
            </PaletteTools>
          </Palette>
        </Workspace>
      </Body>
    </Window>
  );
}
